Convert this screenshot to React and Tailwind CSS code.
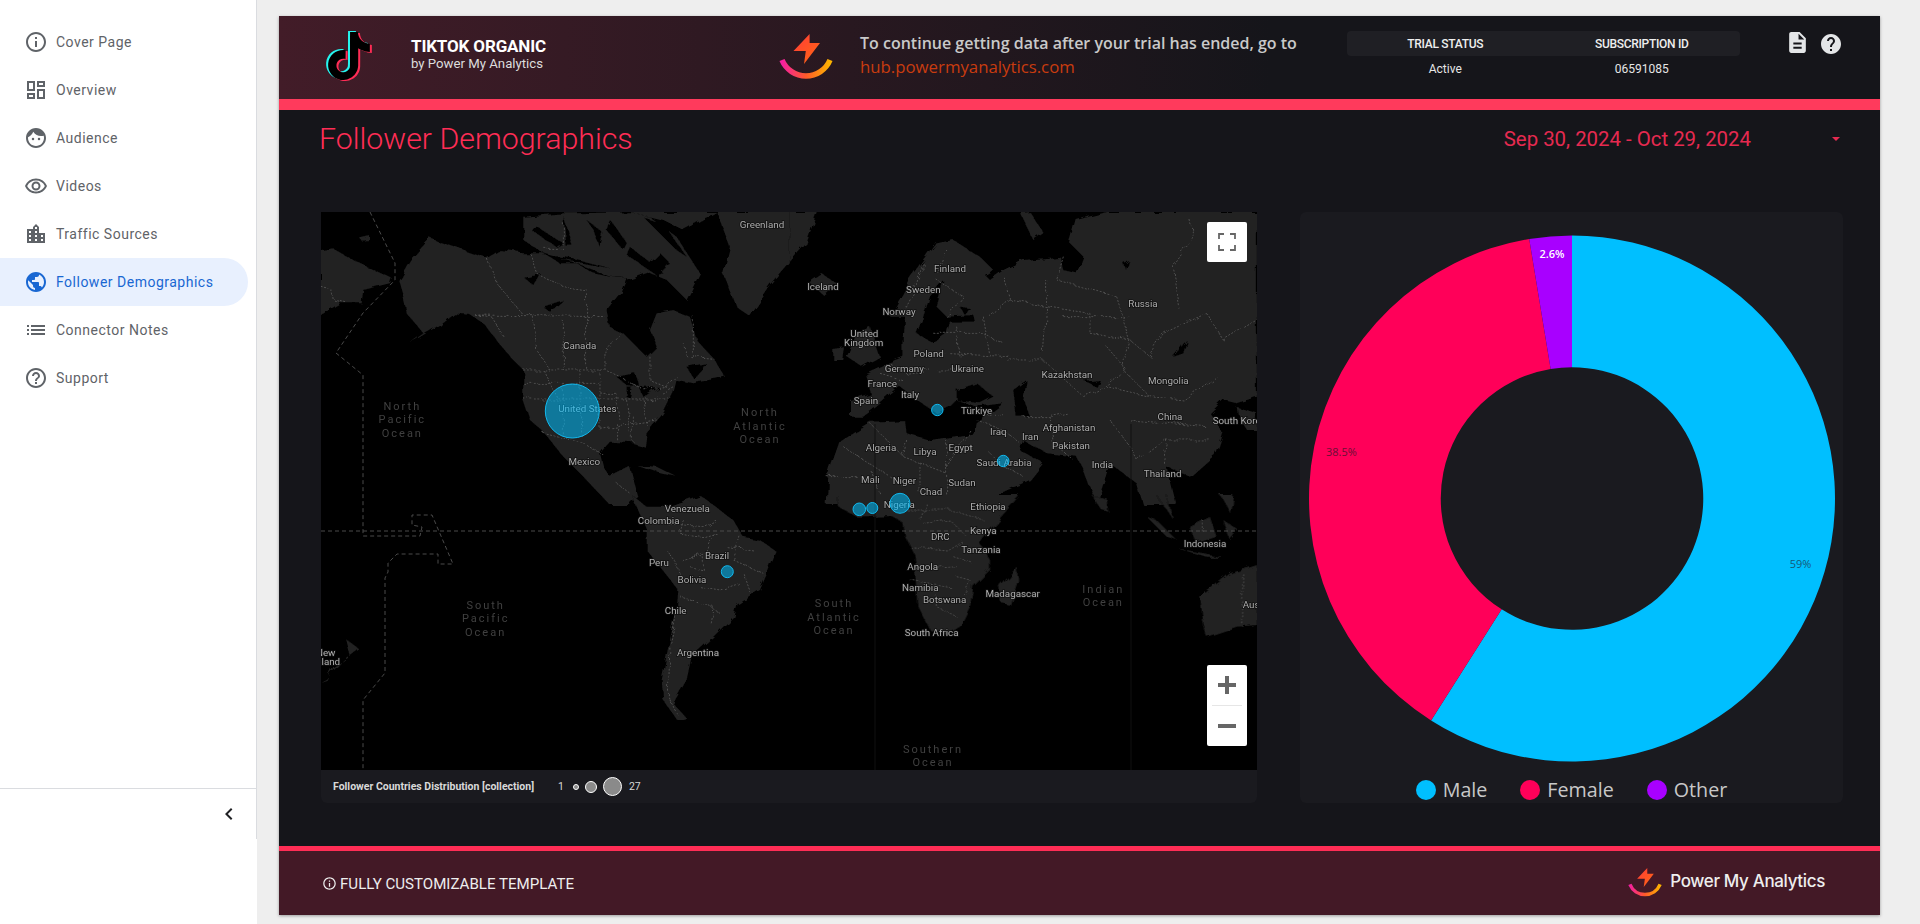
import {
  MdInfoOutline,
  MdOutlineDashboard,
  MdFace,
  MdOutlineRemoveRedEye,
  MdLocationCity,
  MdPublic,
  MdList,
  MdHelpOutline,
  MdChevronLeft,
  MdDescription,
  MdHelp,
} from "react-icons/md";
import { SiTiktok } from "react-icons/si";

const navItems = [
  { label: "Cover Page", icon: MdInfoOutline },
  { label: "Overview", icon: MdOutlineDashboard },
  { label: "Audience", icon: MdFace },
  { label: "Videos", icon: MdOutlineRemoveRedEye },
  { label: "Traffic Sources", icon: MdLocationCity },
  { label: "Follower Demographics", icon: MdPublic, active: true },
  { label: "Connector Notes", icon: MdList },
  { label: "Support", icon: MdHelpOutline },
];

// map pieces, in the coordinates of four 3x quadrants of the map
const quadrants = {
  nw: {
    origin: [-11, -12],
    land: [
      "265,240 300,180 360,115 430,140 530,175 570,150 640,160 700,160 750,190 800,190 850,220 900,230 950,235 930,280 890,330 900,380 940,400 1010,470 1040,440 1020,390 1040,340 1090,330 1140,350 1160,420 1210,475 1245,530 1150,550 1100,540 1090,580 1060,640 1010,700 1005,740 970,730 900,725 870,760 880,800 900,830 960,800 985,890 960,915 900,915 820,830 760,770 720,720 700,695 660,660 640,600 640,510 600,470 560,420 520,370 480,345 430,340 380,380 300,430 340,400 290,340 280,290",
      "640,50 760,40 1000,36 1100,110 1170,220 1130,300 1070,240 1010,215 960,235 900,230 800,190 700,160 640,120",
      "960,36 1220,36 1120,90 1060,60",
      "1220,36 1440,36 1440,190 1380,260 1320,350 1280,320 1240,220 1260,140",
      "33,150 70,145 150,190 245,235 240,250 160,270 155,310 90,310 33,345",
      "150,115 180,108 180,120 155,122",
      "980,795 1040,800 1100,830 1050,820",
    ],
    water: [
      "640,230 690,220 670,255",
      "700,320 760,300 720,335",
      "920,530 975,520 990,560 950,555",
      "950,560 965,560 960,595 950,590",
      "990,565 1050,560 1000,590",
      "680,80 760,130 740,140 670,95",
      "760,50 790,140 770,140",
      "830,60 880,100 870,140 850,90",
      "900,60 950,130 940,150 890,90",
      "700,165 790,175 900,205 800,185",
      "960,140 1060,220 1040,225 950,165",
      "1050,160 1080,190 1040,230 1020,190",
      "1000,50 1060,70 1130,170 1100,150",
      "1130,500 1190,490 1150,535",
    ],
    borders: [
      "640,510 885,510 930,530 1000,570 1060,560 1100,530",
      "495,345 890,350",
      "495,345 545,350 585,415",
      "670,350 680,450 720,510",
      "760,360 760,510",
      "830,280 830,510",
      "885,510 885,450 930,400",
      "535,180 560,250 640,345",
      "660,160 680,220 760,260 830,270",
      "760,70 760,145 700,145",
      "1020,470 1020,540 1070,560",
      "1150,350 1150,470 1210,475",
      "1120,430 1130,470 1150,470",
      "640,550 870,550",
      "640,597 1090,597",
      "700,510 740,590",
      "810,510 810,590",
      "870,510 870,690",
      "760,550 760,710",
      "815,597 815,710",
      "870,580 920,580 930,660",
      "950,600 960,700",
      "1000,600 1010,680",
      "700,700 820,730 880,765",
      "870,685 1040,660",
      "920,670 920,720",
      "970,650 970,725",
      "1020,600 1090,560",
      "920,850 960,880",
      "35,262 65,270 70,300 110,308",
    ],
    labels: [
      ["Canada", 809, 435],
      ["Mexico", 823, 783],
      ["Greenland", 1356, 72],
      ["United States", 832, 624],
    ],
    oceans: [
      ["North", 277, 618],
      ["Pacific", 277, 657],
      ["Ocean", 277, 699],
      ["North", 1350, 636],
      ["Atlantic", 1350, 678],
      ["Ocean", 1350, 718],
    ],
  },
  ne: {
    origin: [469, -12],
    land: [
      "180,600 240,580 225,520 290,490 340,470 340,440 345,350 300,350 360,240 440,130 490,120 570,170 610,210 585,225 600,240 640,210 700,180 810,170 820,210 860,220 880,170 840,130 860,60 950,36 1401,36 1401,590 1340,610 1300,600 1260,640 1300,700 1280,760 1200,830 1130,800 1160,915 1060,915 1040,850 960,790 920,915 880,810 860,770 770,760 700,720 690,750 760,790 720,840 620,885 640,915 110,915 115,820 150,720 240,665 345,660 350,700 420,720 555,700 560,670 640,610 560,620 500,600 480,620 440,640 380,600 330,560 260,620 220,650 180,650",
      "170,470 200,400 240,380 270,470 215,500",
      "130,450 165,445 160,480 130,480",
      "60,250 100,225 140,250 100,285",
      "0,36 80,36 50,130 0,185",
      "690,40 720,36 760,100 730,120",
      "1340,620 1401,640 1401,690 1370,690 1345,650",
    ],
    water: [
      "400,350 420,290 460,240 440,320 470,350 550,345 555,365 480,365 470,400 430,430 380,400",
      "500,570 560,550 610,590 570,610 500,600",
      "670,570 710,540 700,600 720,650 680,650",
      "885,545 930,540 920,560",
      "1150,470 1190,420 1180,460",
      "510,320 540,325 525,345",
      "1000,190 1015,180 1005,205",
    ],
    borders: [
      "400,190 370,280 340,340",
      "470,150 440,240 520,290 470,350",
      "430,400 570,400 640,430",
      "460,460 660,470",
      "300,490 350,520 420,510",
      "270,520 340,540",
      "440,510 580,510",
      "500,380 510,470",
      "580,350 600,470",
      "640,230 660,300 600,350",
      "660,300 770,320 760,460",
      "770,240 770,320 900,340 900,400",
      "820,170 800,240 980,290",
      "980,290 1020,420 1000,510",
      "1200,60 1210,110 1150,200 1170,330",
      "900,400 1020,420 1080,470 1120,400 1250,340 1300,420",
      "1300,420 1400,360",
      "820,350 1020,350",
      "950,440 1010,510 950,560 1080,590 1180,600 1280,530",
      "650,480 760,480 880,590 950,560",
      "1000,510 1080,590",
      "700,650 780,650 830,640",
      "780,650 790,730 850,780",
      "960,660 1020,740 1040,780 1120,720 1260,720",
      "1020,660 1250,680",
      "1130,720 1120,790",
      "560,660 640,690 690,730",
      "560,620 600,650 640,640",
      "540,690 470,800",
      "350,720 340,770 470,820",
      "240,670 340,770",
      "160,740 330,850",
      "470,720 470,900",
      "240,810 280,900",
      "390,790 390,880",
      "600,760 640,800 700,830",
      "110,830 200,830",
    ],
    labels: [
      ["Finland", 480, 204],
      ["Iceland", 99, 258],
      ["Sweden", 400, 267],
      ["Norway", 327, 334],
      ["Russia", 1059, 309],
      ["United", 223, 399],
      ["Kingdom", 221, 427],
      ["Poland", 416, 459],
      ["Germany", 343, 504],
      ["Ukraine", 533, 504],
      ["Kazakhstan", 831, 522],
      ["Mongolia", 1135, 540],
      ["France", 277, 549],
      ["Italy", 360, 583],
      ["Spain", 228, 601],
      ["Türkiye", 560, 630],
      ["China", 1140, 648],
      ["South Korea", 1348, 660],
      ["Afghanistan", 837, 681],
      ["Iraq", 625, 694],
      ["Iran", 721, 708],
      ["Pakistan", 843, 735],
      ["Algeria", 273, 742],
      ["Libya", 405, 753],
      ["Egypt", 512, 742],
      ["Saudi Arabia", 642, 786],
      ["India", 937, 792],
      ["Thailand", 1118, 819],
      ["Mali", 241, 837],
      ["Niger", 343, 841],
      ["Sudan", 516, 846],
      ["Chad", 423, 873],
    ],
    oceans: [],
  },
  sw: {
    origin: [-11, 288],
    land: [
      "965,-15 1010,20 1070,20 1170,-15 1230,30 1270,60 1300,110 1350,120 1400,155 1350,270 1280,310 1270,350 1210,410 1145,470 1130,540 1090,610 1130,655 1100,660 1060,600 1055,540 1075,440 1100,330 1105,270 1010,150 1010,90",
      "33,545 50,535 100,480 145,445 105,415 120,470 70,500 50,540",
    ],
    water: [],
    borders: [
      "1060,70 1180,80 1220,60",
      "1120,60 1110,100 1180,110 1220,100",
      "1210,100 1190,160 1110,180",
      "1070,150 1100,190 1110,230",
      "1110,290 1200,320 1230,340",
      "1170,260 1230,270 1290,250",
      "1140,170 1180,170 1180,210 1140,200",
      "1210,320 1200,370",
      "1290,110 1270,180 1360,220",
      "1250,140 1330,150",
      "1300,220 1320,280",
      "1100,340 1080,440 1075,590 1100,640",
    ],
    labels: [
      ["Venezuela", 1132, 25],
      ["Colombia", 1046, 60],
      ["Brazil", 1221, 165],
      ["Peru", 1047, 186],
      ["Bolivia", 1146, 237],
      ["Chile", 1097, 330],
      ["Argentina", 1164, 457],
      ["New", 47, 456],
      ["Zealand", 38, 483],
    ],
    oceans: [
      ["South", 527, 315],
      ["Pacific", 527, 354],
      ["Ocean", 527, 396],
    ],
  },
  se: {
    origin: [469, 288],
    land: [
      "140,-15 150,25 200,50 300,45 340,70 345,110 370,160 380,240 385,320 420,390 470,405 510,380 540,320 550,260 600,210 600,180 570,130 600,90 690,-15",
      "630,260 680,200 685,240 660,315 635,310",
      "905,-15 950,-5 955,35 935,30",
      "1070,50 1100,60 1160,120 1130,110",
      "1200,80 1260,50 1280,110 1220,130",
      "1160,145 1300,170 1250,170",
      "1100,-15 1130,-15 1150,60",
      "1290,-15 1330,-15 1320,40",
      "1300,60 1345,90 1320,120",
      "1230,290 1320,220 1401,195 1401,375 1340,380 1250,410 1240,370",
    ],
    water: [],
    borders: [
      "340,30 480,30 580,60",
      "400,70 480,60 530,110",
      "360,140 470,150 520,120",
      "370,210 500,200",
      "360,240 480,260",
      "430,260 440,320 500,350",
      "490,170 550,190",
      "500,230 540,240 520,290",
      "410,10 390,60",
      "1240,60 1240,100",
      "1358,220 1358,380",
    ],
    labels: [
      ["Nigeria", 328, 12],
      ["Ethiopia", 594, 18],
      ["Kenya", 580, 90],
      ["DRC", 451, 108],
      ["Tanzania", 573, 147],
      ["Indonesia", 1245, 129],
      ["Angola", 398, 198],
      ["Namibia", 391, 261],
      ["Madagascar", 668, 280],
      ["Botswana", 464, 297],
      ["Australia", 1416, 312],
      ["South Africa", 425, 396],
    ],
    oceans: [
      ["South", 132, 309],
      ["Atlantic", 132, 351],
      ["Ocean", 132, 391],
      ["Indian", 940, 267],
      ["Ocean", 940, 307],
      ["Southern", 429, 747],
      ["Ocean", 429, 787],
    ],
  },
};

const bubbles = [
  [251.3, 199, 27],
  [616.3, 198, 5.7],
  [682.3, 249, 5.7],
  [406.3, 359.7, 6],
  [579, 291.3, 10],
  [538.3, 297.3, 6.3],
  [551.3, 296, 5.5],
];

const slices = [
  { color: "#00bfff", from: 0, to: 0.59 },
  { color: "#ff0059", from: 0.59, to: 0.974 },
  { color: "#a800ff", from: 0.974, to: 1 },
];

function slicePath(from, to, r, hole, c) {
  const pt = (t, rad) => {
    const a = t * 2 * Math.PI - Math.PI / 2;
    return `${c + rad * Math.cos(a)} ${c + rad * Math.sin(a)}`;
  };
  const big = to - from > 0.5 ? 1 : 0;
  return `M${pt(from, r)} A${r} ${r} 0 ${big} 1 ${pt(to, r)} L${pt(to, hole)} A${hole} ${hole} 0 ${big} 0 ${pt(from, hole)} Z`;
}

function PmaLogo({ id, className }) {
  return (
    <svg viewBox="0 0 54 46" className={className}>
      <defs>
        <linearGradient id={`${id}-arc`} x1="0" x2="1" y1="0" y2="0">
          <stop offset="0" stopColor="#f51fa0" />
          <stop offset="0.5" stopColor="#ff5a2a" />
          <stop offset="1" stopColor="#fdb400" />
        </linearGradient>
        <linearGradient id={`${id}-bolt`} x1="0" x2="1" y1="0" y2="1">
          <stop offset="0" stopColor="#ff3a3a" />
          <stop offset="1" stopColor="#ff6a10" />
        </linearGradient>
      </defs>
      <path d="M3 26 A26 26 0 0 0 51 26" fill="none" stroke={`url(#${id}-arc)`} strokeWidth="5.5" />
      <polygon points="30.6,0 14.5,17 26.8,17 25,30 41,9 30.6,9" fill={`url(#${id}-bolt)`} />
    </svg>
  );
}

function TiktokLogo() {
  return (
    <div className="relative w-[44px] h-[50px]">
      <SiTiktok className="absolute left-0 top-0 w-[48px] h-[48px] text-[#25f4ee]" />
      <SiTiktok className="absolute left-[4px] top-[2px] w-[48px] h-[48px] text-[#fe2c55]" />
      <SiTiktok className="absolute left-[2px] top-[1px] w-[48px] h-[48px] text-black" />
    </div>
  );
}

function WorldMap() {
  const regions = Object.values(quadrants);
  return (
    <svg viewBox="0 0 936 558" className="absolute inset-0 w-full h-full">
      <defs>
        <filter id="rough" x="0" y="0" width="100%" height="100%">
          <feTurbulence type="fractalNoise" baseFrequency="0.07" numOctaves="3" seed="4" />
          <feDisplacementMap in="SourceGraphic" scale="7" />
        </filter>
      </defs>
      <g filter="url(#rough)">
        {regions.map((r, i) => (
          <g key={i} transform={`translate(${r.origin[0]} ${r.origin[1]}) scale(0.3333)`}>
            {r.land.map((p, j) => (
              <polygon key={j} points={p} fill="#202020" />
            ))}
            {r.water.map((p, j) => (
              <polygon key={j} points={p} fill="#000" />
            ))}
            {r.borders.map((p, j) => (
              <polyline
                key={j}
                points={p}
                fill="none"
                stroke="#5c5c5c"
                strokeWidth="0.8"
                strokeDasharray="2 1.5"
                vectorEffect="non-scaling-stroke"
              />
            ))}
          </g>
        ))}
      </g>
      {/* date line and equator */}
      <g fill="none" stroke="#4a4a4a" strokeWidth="1" strokeDasharray="4 3">
        <polyline points="49,0 74,51 74,68 42,101 15,141 42,163 42,288 42,324 99,324 101,315 91,313 91,303 111,303 132,352 117,352 117,342 76,342 67,351 67,360 64,366 64,461 42,488 42,558" />
        <line x1="0" y1="319" x2="936" y2="319" />
      </g>
      <g stroke="#101010" strokeWidth="1">
        <line x1="554" y1="212" x2="554" y2="558" />
        <line x1="810" y1="212" x2="810" y2="558" />
      </g>
      {regions.map((r, i) => (
        <g key={i} transform={`translate(${r.origin[0]} ${r.origin[1]})`}>
          {r.labels.map(([text, x, y]) => (
            <text
              key={text + x}
              x={x / 3}
              y={y / 3 + 3.5}
              textAnchor="middle"
              fontFamily="Roboto, sans-serif"
              fontSize="9.8"
              fill="#adadad"
              stroke="#111"
              strokeWidth="1.5"
              paintOrder="stroke"
            >
              {text}
            </text>
          ))}
          {r.oceans.map(([text, x, y]) => (
            <text
              key={text + x + y}
              x={x / 3}
              y={y / 3 + 4}
              textAnchor="middle"
              fontFamily="Roboto, sans-serif"
              fontSize="11"
              letterSpacing="2"
              fill="#404040"
            >
              {text}
            </text>
          ))}
        </g>
      ))}
      {bubbles.map(([x, y, r], i) => (
        <circle key={i} cx={x} cy={y} r={r} fill="#00bfff" fillOpacity="0.55" stroke="#12b9ee" strokeWidth="1" />
      ))}
    </svg>
  );
}

export default function App() {
  return (
    <div className="flex w-[1920px] h-[924px] overflow-hidden bg-[#eeeeee] font-['Roboto',sans-serif]">
      <aside className="w-[257px] h-full bg-white flex flex-col shrink-0">
        <div className="h-[839px] border-r border-[#dadce0] flex flex-col">
          <nav className="pt-[18px] flex-1">
            {navItems.map((item) => {
              const Icon = item.icon;
              return (
                <div
                  key={item.label}
                  className={`flex items-center h-[48px] w-[248px] pl-[24px] rounded-r-full text-[14px] tracking-[0.5px] ${
                    item.active ? "bg-[#e8f0fe] text-[#1967d2]" : "text-[#5f6368]"
                  }`}
                >
                  <Icon className="w-[24px] h-[24px] mr-[8px]" />
                  <span>{item.label}</span>
                </div>
              );
            })}
          </nav>
          <div className="h-[51px] border-t border-[#dadce0] flex items-center justify-end pr-[15px]">
            <MdChevronLeft className="w-[24px] h-[24px] text-[#202124]" />
          </div>
        </div>
      </aside>

      <main className="flex-1 pl-[22px] pt-[16px]">
        <div className="w-[1601px] h-[899px] bg-[#15151a] flex flex-col shadow-[0_1px_3px_rgba(0,0,0,0.35)]">
          <header className="h-[83px] flex items-start bg-[linear-gradient(90deg,#421c28_0%,#15151a_62%)] text-white">
            <div className="ml-[44px] mt-[15px] w-[45px]">
              <TiktokLogo />
            </div>
            <div className="ml-[43px] w-[368px] mt-[20px]">
              <div className="text-[17px] font-bold leading-[20px] tracking-[-0.15px]">TIKTOK ORGANIC</div>
              <div className="text-[13.2px] leading-[16px] text-[#dddddd]">by Power My Analytics</div>
            </div>
            <PmaLogo id="top" className="w-[54px] h-[46px] mt-[18px]" />
            <div className="ml-[27px] w-[487px] mt-[16px] font-['Open_Sans',sans-serif] leading-[23px]">
              <div className="text-[16px] font-semibold text-[#c9c9c9] whitespace-nowrap">To continue getting data after your trial has ended, go to</div>
              <div className="text-[16.8px] text-[#c93c0f]">hub.powermyanalytics.com</div>
            </div>
            <div className="w-[393px] mt-[15px]">
              <div className="grid grid-cols-2 h-[25px] items-center bg-[#1f1f24] rounded-[4px] text-center text-[12px] font-medium tracking-[-0.3px] text-[#eeeeee]">
                <div>TRIAL STATUS</div>
                <div>SUBSCRIPTION ID</div>
              </div>
              <div className="grid grid-cols-2 h-[25px] items-center text-center text-[12px] text-[#e6e6e6]">
                <div>Active</div>
                <div>06591085</div>
              </div>
            </div>
            <MdDescription className="ml-[45px] mt-[14px] w-[25px] h-[25px] text-[#e4e6e8]" />
            <MdHelp className="ml-[9px] mt-[16px] w-[24px] h-[24px] text-[#e4e6e8]" />
          </header>
          <div className="h-[11px] bg-[#ff3a5c]" />

          <div className="flex-1 flex flex-col">
            <div className="h-[102px] flex items-start justify-between pl-[40px] pr-[40px]">
              <h1 className="mt-[11px] text-[30.3px] leading-[36px] font-light text-[#ff2d55]">Follower Demographics</h1>
              <div className="flex items-center mt-[17px] text-[#e62a50]">
                <span className="text-[20.4px] leading-[24px]">Sep 30, 2024 - Oct 29, 2024</span>
                <span className="ml-[81px] w-0 h-0 border-x-[4px] border-x-transparent border-t-[4px] border-t-[#e62a50]" />
              </div>
            </div>

            <div className="flex pl-[42px]">
              <section className="w-[936px] h-[591px] bg-[#1a1a1f] rounded-b-[6px] flex flex-col">
                <div className="relative h-[558px] bg-black overflow-hidden">
                  <WorldMap />
                  <button className="absolute left-[886px] top-[10px] w-[40px] h-[40px] bg-white rounded-[2px] flex items-center justify-center">
                    <svg viewBox="0 0 18 18" className="w-[18px] h-[18px]" fill="none" stroke="#666666" strokeWidth="1.8">
                      <path d="M1 6V1h5M12 1h5v5M17 12v5h-5M6 17H1v-5" />
                    </svg>
                  </button>
                  <div className="absolute left-[886px] top-[453px] w-[40px] h-[81px] bg-white rounded-[2px] flex flex-col items-center">
                    <div className="h-[40px] flex items-center">
                      <svg viewBox="0 0 18 18" className="w-[18px] h-[18px]" fill="#666666">
                        <path d="M7 0h4v7h7v4h-7v7H7v-7H0V7h7z" />
                      </svg>
                    </div>
                    <div className="w-[30px] h-px bg-[#e6e6e6]" />
                    <div className="h-[40px] flex items-center">
                      <svg viewBox="0 0 18 18" className="w-[18px] h-[18px]" fill="#666666">
                        <path d="M0 7h18v4H0z" />
                      </svg>
                    </div>
                  </div>
                </div>
                <div className="flex-1 flex items-center pl-[12px] text-[#d8d8d8]">
                  <span className="text-[10.5px] font-bold w-[215px] whitespace-nowrap">Follower Countries Distribution [collection]</span>
                  <span className="ml-[10px] text-[10.5px]">1</span>
                  <span className="ml-[9px] w-[6px] h-[6px] rounded-full bg-[#8a8a8a] border border-white" />
                  <span className="ml-[6px] w-[12px] h-[12px] rounded-full bg-[#8a8a8a] border border-white" />
                  <span className="ml-[6px] w-[19px] h-[19px] rounded-full bg-[#8a8a8a] border border-white" />
                  <span className="ml-[7px] text-[10.5px]">27</span>
                </div>
              </section>

              <section className="ml-[43px] w-[543px] h-[591px] bg-[#1a1a1f] rounded-[6px] flex flex-col items-center pt-[23px] font-['Open_Sans',sans-serif]">
                <svg viewBox="0 0 528 528" className="w-[528px] h-[528px]">
                  {slices.map((s) => (
                    <path key={s.color} d={slicePath(s.from, s.to, 263.5, 131.5, 264)} fill={s.color} />
                  ))}
                  <text x="244" y="23" textAnchor="middle" fontSize="11" fontWeight="600" fill="#ffffff">2.6%</text>
                  <text x="33" y="221" textAnchor="middle" fontSize="11" fill="#6a0f35">38.5%</text>
                  <text x="493" y="334" textAnchor="middle" fontSize="11" fill="#155a78">59%</text>
                </svg>
                <div className="flex items-center mt-[15px] text-[19.7px] leading-[26px] text-[#c8c8c8]">
                  <span className="w-[20px] h-[20px] rounded-full bg-[#00bfff]" />
                  <span className="ml-[7px]">Male</span>
                  <span className="ml-[33px] w-[20px] h-[20px] rounded-full bg-[#ff0059]" />
                  <span className="ml-[7px]">Female</span>
                  <span className="ml-[33px] w-[20px] h-[20px] rounded-full bg-[#a800ff]" />
                  <span className="ml-[7px]">Other</span>
                </div>
              </section>
            </div>
          </div>

          <div className="h-[5px] bg-[#ff2d55]" />
          <footer className="h-[64px] bg-[#431926] flex items-center justify-between pl-[43px] pr-[55px] text-[#eeeeee]">
            <div className="flex items-center text-[15.1px] mt-[2px]">
              <MdInfoOutline className="w-[15px] h-[15px] mr-[3px]" />
              FULLY CUSTOMIZABLE TEMPLATE
            </div>
            <div className="flex items-center -mt-[2px]">
              <PmaLogo id="foot" className="w-[34px] h-[29px]" />
              <span className="ml-[8px] text-[17px] font-medium font-['Inter',sans-serif] tracking-[-0.35px]">Power My Analytics</span>
            </div>
          </footer>
        </div>
      </main>
    </div>
  );
}
